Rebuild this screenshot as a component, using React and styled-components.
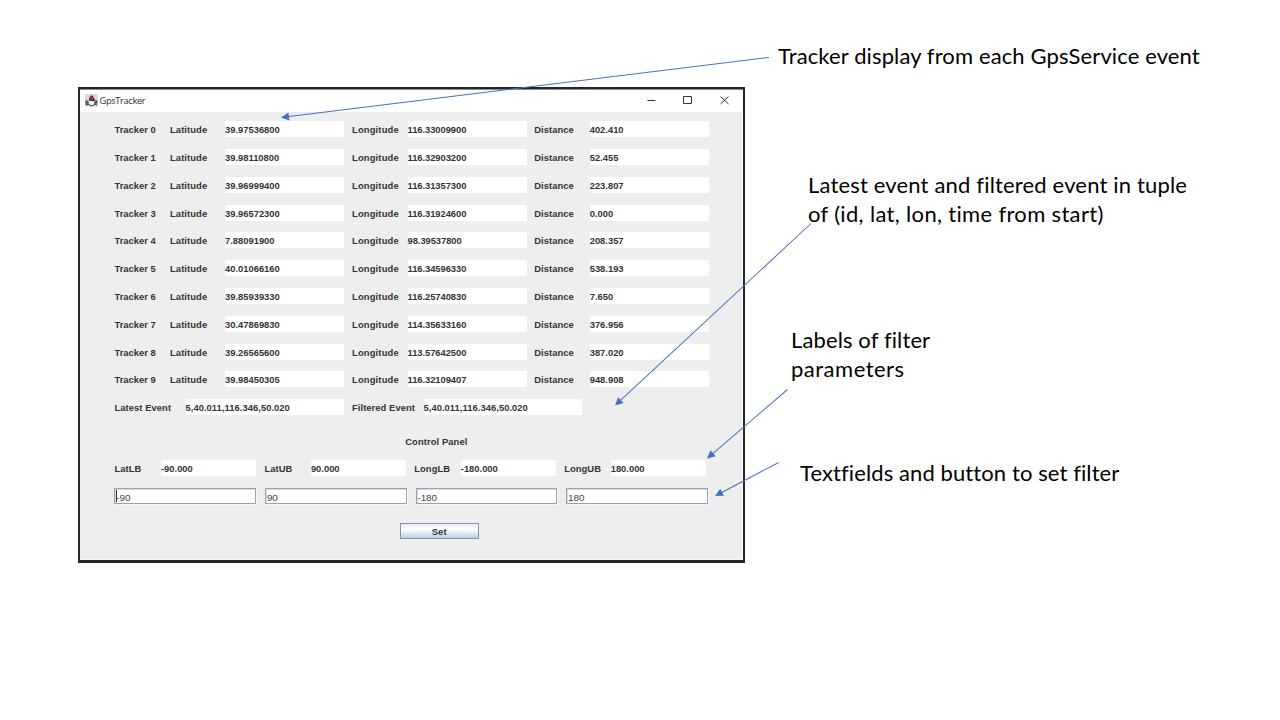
import React from "react";
import styled, { createGlobalStyle } from "styled-components";

const GlobalStyle = createGlobalStyle`
  * { box-sizing: border-box; }
  body { margin: 0; background: #fff; }
`;

const Slide = styled.main`
  position: relative;
  width: 1280px;
  height: 720px;
  padding: 87px 0 0 78px;
  overflow: hidden;
  background: #fff;
`;

const Window = styled.section`
  width: 667px;
  height: 476px;
  display: flex;
  flex-direction: column;
  border: solid #242629;
  border-width: 2px 2px 3px 2px;
  background: #eee;
  box-shadow: inset 0 1px 0 #8d8d8d, inset -1px -1px 0 #f8f8f8;
  font: bold 9.4px/17px "Liberation Sans", Arial, sans-serif;
  color: #333;
`;

const TitleBar = styled.header`
  height: 23px;
  margin: 0 1px 0 0;
  display: flex;
  align-items: center;
  padding: 0 12.3px 1px 5px;
  background: #fff;
  border-top: 1px solid #8d8d8d;
`;

const Title = styled.h1`
  margin: 0 auto 0 1.5px;
  font: 400 9.4px/14px "Open Sans", sans-serif;
  letter-spacing: -0.4px;
  color: #333;
`;

const WindowButtons = styled.div`
  display: flex;
  gap: 25.5px;
  svg { display: block; width: 11px; height: 11px; }
`;

const Body = styled.div`
  padding: 9.2px 0 0 34.5px;
`;

const Rows = styled.div`
  display: grid;
  grid-auto-rows: 16px;
  row-gap: 11.8px;
`;

const TrackerRow = styled.div`
  display: grid;
  grid-template-columns: 55.5px 55px 127px 55.5px 126.7px 55.5px 119px;
`;

const EventRow = styled.div`
  display: grid;
  grid-template-columns: 71px 166.5px 71.5px 158.5px;
`;

const Label = styled.span`
  white-space: nowrap;
  letter-spacing: ${(p) => p.$spacing ?? 0.07}px;
`;

const Value = styled.output`
  width: ${(p) => p.$width}px;
  height: 16px;
  background: #fff;
  white-space: nowrap;
  letter-spacing: ${(p) => p.$spacing ?? 0}px;
`;

const PanelTitle = styled.h2`
  margin: 18px 0 0 290.7px;
  font: inherit;
  letter-spacing: 0.1px;
`;

const BoundsRow = styled.div`
  display: grid;
  grid-template-columns: repeat(4, 46.5px 103.4px);
  grid-auto-rows: 16px;
  margin-top: 9.7px;
`;

const FieldRow = styled.div`
  display: flex;
  gap: 9px;
  margin: 12.3px 0 0 -0.2px;
`;

const Field = styled.input`
  width: 141.6px;
  height: 15.5px;
  padding: 3px 0 0 1px;
  border: 1px solid #94a3b5;
  border-radius: 0;
  outline: 0;
  background: #fff;
  box-shadow: inset 1px 1px 0 #d3dce7, 1px 1px 0 #fafafa;
  font: 400 9.9px/11px "Liberation Sans", Arial, sans-serif;
  letter-spacing: -0.1px;
  color: #444;
`;

const FocusedField = styled(Field)`
  background: linear-gradient(#333, #333) 1px 1px / 1px 12px no-repeat #fff;
`;

const SetButton = styled.button`
  display: block;
  width: 79px;
  height: 16px;
  margin: 19.2px 0 0 285.2px;
  padding: 1px 0 0;
  border: 1px solid #8495aa;
  border-radius: 0;
  background: linear-gradient(#e2ebf4, #fff 35%, #e7eff6 60%, #b8cfe5);
  font: inherit;
  line-height: 14px;
  letter-spacing: 0.1px;
  color: #333;
`;

const Note = styled.p`
  position: absolute;
  left: ${(p) => p.$x}px;
  top: ${(p) => p.$y}px;
  margin: 0;
  font: 400 22px/29px Lato, sans-serif;
  color: #000;
  white-space: nowrap;
`;

const NoteLine = styled.span`
  display: block;
  font-variant-ligatures: none;
  letter-spacing: ${(p) => p.$spacing}px;
`;

const Arrows = styled.svg`
  position: absolute;
  inset: 0;
  width: 1280px;
  height: 720px;
  pointer-events: none;
`;

const trackers = [
  ["39.97536800", "116.33009900", "402.410"],
  ["39.98110800", "116.32903200", "52.455"],
  ["39.96999400", "116.31357300", "223.807"],
  ["39.96572300", "116.31924600", "0.000"],
  ["7.88091900", "98.39537800", "208.357"],
  ["40.01066160", "116.34596330", "538.193"],
  ["39.85939330", "116.25740830", "7.650"],
  ["30.47869830", "114.35633160", "376.956"],
  ["39.26565600", "113.57642500", "387.020"],
  ["39.98450305", "116.32109407", "948.908"],
];

const bounds = [
  ["LatLB", "-90.000"],
  ["LatUB", "90.000"],
  ["LongLB", "-180.000"],
  ["LongUB", "180.000"],
];

const arrows = [
  [769, 57.5, 281, 117.5],
  [811, 223.5, 615, 405.5],
  [787.5, 389.5, 707, 458.5],
  [778.5, 462.5, 715, 496],
];

function Arrow({ points: [x1, y1, x2, y2] }) {
  const length = Math.hypot(x2 - x1, y2 - y1);
  const angle = (Math.atan2(y2 - y1, x2 - x1) * 180) / Math.PI;
  return (
    <g transform={`translate(${x1} ${y1}) rotate(${angle})`}>
      <path d={`M0 0H${length - 6}`} stroke="#4472c4" strokeWidth="1" />
      <path d={`M${length} 0l-8-4v8z`} fill="#4472c4" />
    </g>
  );
}

function AppIcon() {
  return (
    <svg width="13" height="13" viewBox="0 0 13 13">
      <path d="M0 0h13v13H0z" fill="#d5dce5" />
      <path d="M0 6.5h3l1 2-1 2H.5zM9.5 6.500l2-.5 1.500 2-1.500 2H9z" fill="#59626e" />
      <path d="M6.5 1Q3.500 4 4 6l1.500 1.500h3L10 6Q9.500 3 6.500 1z" fill="#30343a" />
      <path d="M4.5 7h4l.5 3-2 1.500L4.500 10z" fill="#f7f8fa" />
      <path d="M1 11q2.500-1.500 3.500 0 2 1.300 4 0 1.500-1.500 3.500 0" fill="none" stroke="#343a42" />
      <circle cx="7" cy="4.5" r="1.7" fill="#e32628" />
    </svg>
  );
}

export default function App() {
  return (
    <Slide>
      <GlobalStyle />
      <Window>
        <TitleBar>
          <AppIcon />
          <Title>GpsTracker</Title>
          <WindowButtons>
            <svg viewBox="0 0 11 11"><path d="M1.5 5.5h8" stroke="#333" /></svg>
            <svg viewBox="0 0 11 11"><path d="M1.5 1.5h8v7h-8z" fill="none" stroke="#333" /></svg>
            <svg viewBox="0 0 11 11"><path d="M1.5 1.5l8 7.5m0-7.5l-8 7.5" stroke="#333" /></svg>
          </WindowButtons>
        </TitleBar>
        <Body>
          <Rows>
            {trackers.map(([lat, lon, distance], i) => (
              <TrackerRow key={i}>
                <Label $spacing={0}>Tracker {i}</Label>
                <Label $spacing={0.1}>Latitude</Label>
                <Value $width={119}>{lat}</Value>
                <Label $spacing={0.17}>Longitude</Label>
                <Value $width={119} $spacing={-0.05}>{lon}</Value>
                <Label>Distance</Label>
                <Value $width={119}>{distance}</Value>
              </TrackerRow>
            ))}
            <EventRow>
              <Label>Latest Event</Label>
              <Value $width={158.5} $spacing={0.05}>5,40.011,116.346,50.020</Value>
              <Label>Filtered Event</Label>
              <Value $width={158.5} $spacing={0.05}>5,40.011,116.346,50.020</Value>
            </EventRow>
          </Rows>
          <PanelTitle>Control Panel</PanelTitle>
          <BoundsRow>
            {bounds.map(([name, value]) => (
              <React.Fragment key={name}>
                <Label>{name}</Label>
                <Value $width={95.3}>{value}</Value>
              </React.Fragment>
            ))}
          </BoundsRow>
          <FieldRow>
            <FocusedField defaultValue="-90" />
            <Field defaultValue="90" />
            <Field defaultValue="-180" />
            <Field defaultValue="180" />
          </FieldRow>
          <SetButton>Set</SetButton>
        </Body>
      </Window>
      <Note $x={778} $y={41}>
        <NoteLine $spacing={0.12}>Tracker display from each GpsService event</NoteLine>
      </Note>
      <Note $x={808} $y={170}>
        <NoteLine $spacing={0.17}>Latest event and filtered event in tuple</NoteLine>
        <NoteLine $spacing={0.33}>of (id, lat, lon, time from start)</NoteLine>
      </Note>
      <Note $x={791} $y={325}>
        <NoteLine $spacing={0.12}>Labels of filter</NoteLine>
        <NoteLine $spacing={0.5}>parameters</NoteLine>
      </Note>
      <Note $x={800} $y={458}>
        <NoteLine $spacing={0.1}>Textfields and button to set filter</NoteLine>
      </Note>
      <Arrows viewBox="0 0 1280 720">
        {arrows.map((points) => <Arrow key={points.join()} points={points} />)}
      </Arrows>
    </Slide>
  );
}
